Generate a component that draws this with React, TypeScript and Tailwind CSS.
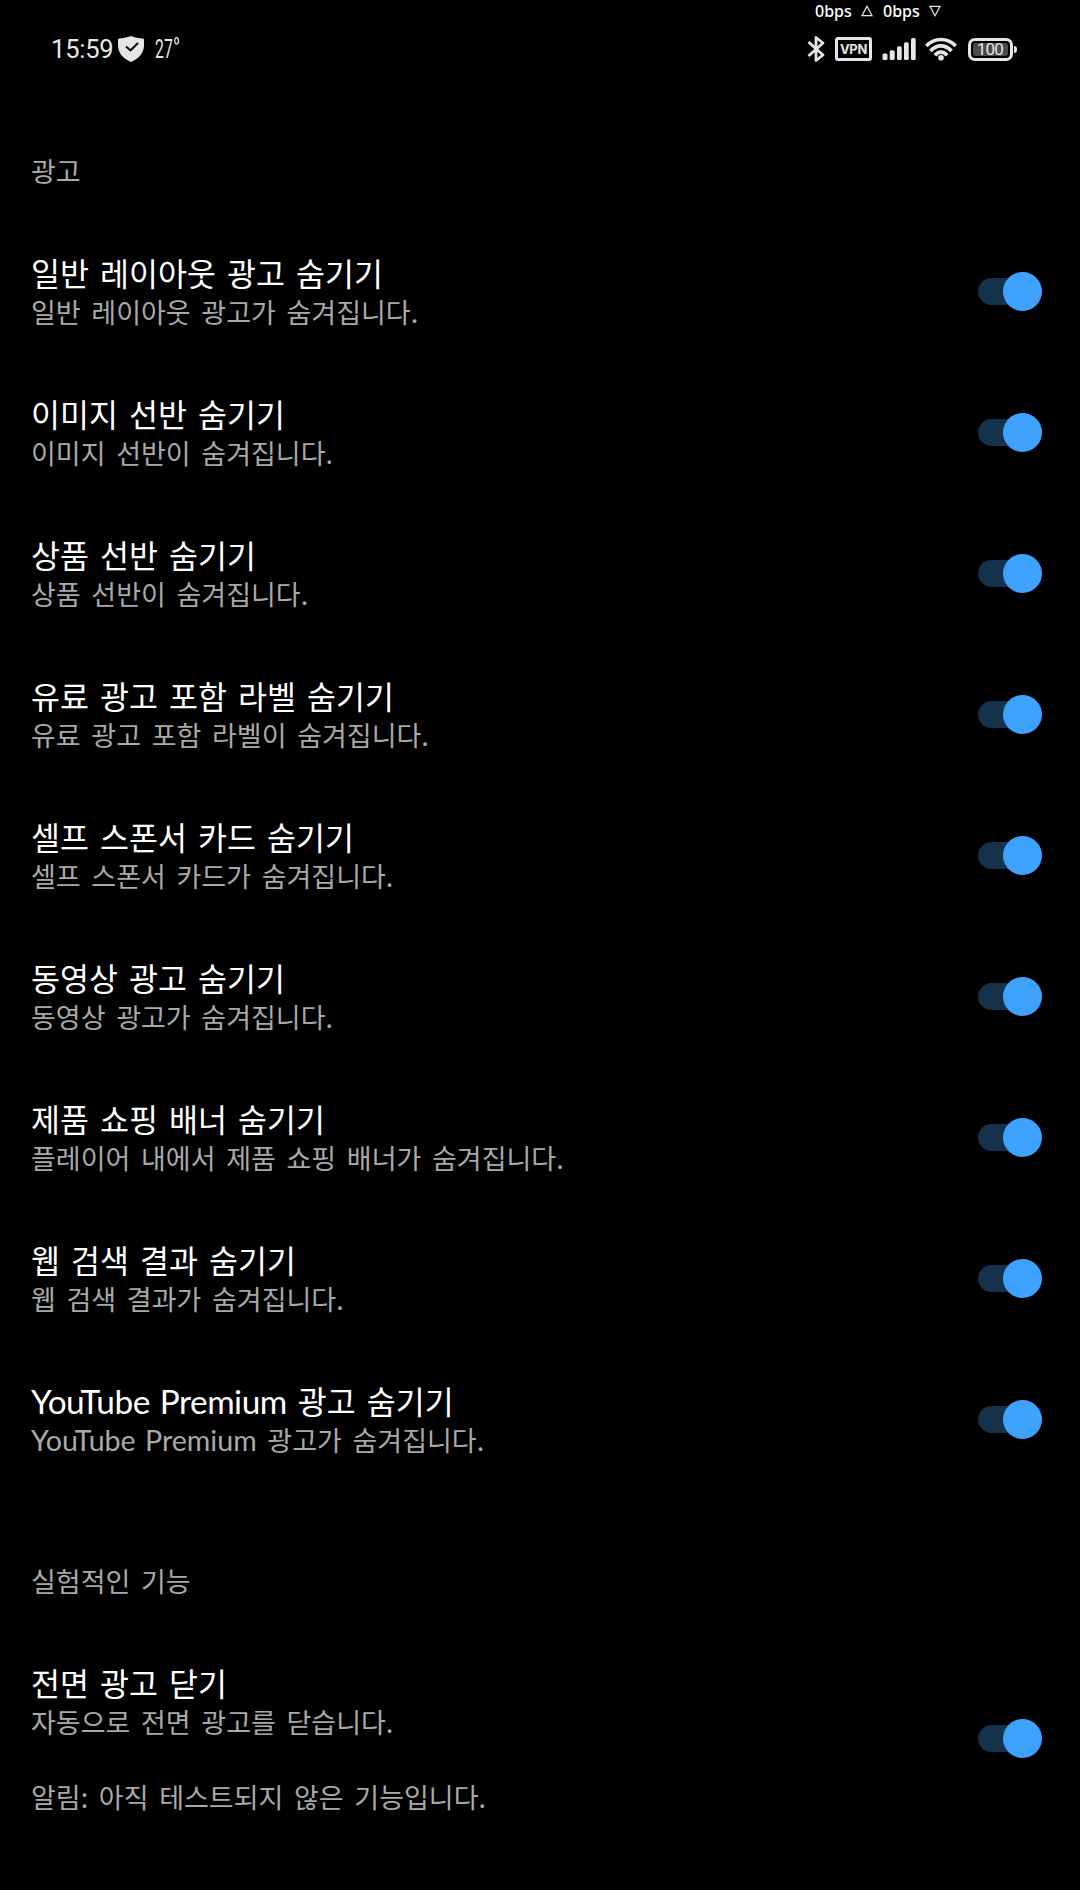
import React from 'react';

interface Setting {
  title: React.ReactNode;
  lines: React.ReactNode[];
}

const adSettings: Setting[] = [
  { title: '일반 레이아웃 광고 숨기기', lines: ['일반 레이아웃 광고가 숨겨집니다.'] },
  { title: '이미지 선반 숨기기', lines: ['이미지 선반이 숨겨집니다.'] },
  { title: '상품 선반 숨기기', lines: ['상품 선반이 숨겨집니다.'] },
  { title: '유료 광고 포함 라벨 숨기기', lines: ['유료 광고 포함 라벨이 숨겨집니다.'] },
  { title: '셀프 스폰서 카드 숨기기', lines: ['셀프 스폰서 카드가 숨겨집니다.'] },
  { title: '동영상 광고 숨기기', lines: ['동영상 광고가 숨겨집니다.'] },
  { title: '제품 쇼핑 배너 숨기기', lines: ['플레이어 내에서 제품 쇼핑 배너가 숨겨집니다.'] },
  { title: '웹 검색 결과 숨기기', lines: ['웹 검색 결과가 숨겨집니다.'] },
  {
    title: (
      <>
        <span className="font-['Lato'] text-[33.4px] tracking-[-0.5px] [word-spacing:2px]">YouTube Premium</span> 광고 숨기기
      </>
    ),
    lines: [
      <>
        <span className="font-['Lato'] text-[28.6px] [word-spacing:2px]">YouTube Premium</span> 광고가 숨겨집니다.
      </>,
    ],
  },
];

const experimentalSettings: Setting[] = [
  {
    title: '전면 광고 닫기',
    lines: ['자동으로 전면 광고를 닫습니다.', '', '알림: 아직 테스트되지 않은 기능입니다.'],
  },
];

function StatusBar() {
  return (
    <header className="h-20 flex-shrink-0 text-[#e6e6e6]">
      {/* Network speed */}
      <div className="flex h-[22px] items-center pl-[815px] font-['Noto_Sans'] text-base font-medium text-white">
        <span className="w-[46px] whitespace-nowrap">0bps</span>
        <svg className="h-3 w-3" viewBox="0 0 12 12" fill="none" stroke="#e6e6e6" strokeWidth="1.2">
          <path d="M6 1.2 11 10.6H1Z" />
        </svg>
        <span className="ml-[10px] w-[46px] whitespace-nowrap">0bps</span>
        <svg className="h-3 w-3" viewBox="0 0 12 12" fill="none" stroke="#e6e6e6" strokeWidth="1.2">
          <path d="M6 10.8 11 1.4H1Z" />
        </svg>
      </div>
      <div className="flex h-[54px] items-center justify-between pr-[63px] pl-[51px]">
        <div className="flex items-center">
          <span className="w-[67px] font-['Roboto'] text-[25.5px] leading-[30px] tracking-[-0.2px] whitespace-nowrap">
            15:59
          </span>
          <svg className="h-[26px] w-[26px]" viewBox="0 0 26 26">
            <path
              d="M13 0C9 1.7 5 2.4 1 2.5Q0 2.6 0 4v5c0 8 5 13.5 13 17 8-3.5 13-9 13-17V4q0-1.4-1-1.5C21 2.4 17 1.7 13 0Z"
              fill="#e6e6e6"
            />
            <path d="m8 10.5 4.5 4L20 7" fill="none" stroke="#000" strokeWidth="2" />
          </svg>
          {/* Temperature, condensed digits */}
          <span className="mr-[-11px] ml-[10.5px] w-[30px] origin-left scale-x-62 font-['Roboto'] text-[25.5px] leading-[30px]">
            27
          </span>
          <svg className="h-[26px] w-[6px]" viewBox="0 0 6 26">
            <ellipse cx="2.6" cy="4.8" rx="1.9" ry="3.2" fill="none" stroke="#e6e6e6" strokeWidth="1.3" />
          </svg>
        </div>
        <div className="flex items-center">
          <svg className="h-7 w-[18px]" viewBox="0 0 18 28" fill="none" stroke="#e6e6e6" strokeWidth="2.8">
            <path d="m1.5 7 14.5 13L9 25.5V2.5L16 8 1.5 21" strokeLinejoin="round" />
          </svg>
          <span className="ml-[10px] flex h-6 w-[37px] items-center justify-center rounded-[3px] border-[3px] border-[#e6e6e6] pt-px font-['Inter'] text-[13px] leading-none font-bold tracking-[-0.3px]">
            VPN
          </span>
          <svg className="ml-[10px] h-[22px] w-[34px]" viewBox="0 0 34 22" fill="#e6e6e6">
            <rect x="0.5" y="15.5" width="5" height="6.5" rx="1.5" />
            <rect x="7.7" y="12.2" width="5" height="9.8" rx="1.5" />
            <rect x="15" y="8.2" width="4.7" height="13.8" rx="1.5" />
            <rect x="22" y="4.2" width="4.7" height="17.8" rx="1.5" />
            <rect x="29" y="0" width="4.7" height="22" rx="1.5" />
          </svg>
          <svg className="ml-[9px] h-6 w-8" viewBox="0 0 32 24" fill="none" stroke="#e6e6e6" strokeWidth="3.7">
            <path d="M1.3 9Q7.5 2.5 16 2.5T30.7 9" />
            <path d="M5.5 14Q10 8.8 16 8.8t10.5 5.2" />
            <path d="M10 18.3q2.5-3.2 6-3.2t6 3.2" />
            <circle cx="16" cy="20.8" r="2.8" fill="#e6e6e6" stroke="none" />
          </svg>
          <div className="ml-[11px] flex h-[23px] w-[45px] items-center justify-center rounded-[7px] border-[3px] border-[#e6e6e6]">
            <span className="flex h-[13px] w-[35px] items-center justify-center rounded-[3px] bg-[#4a4a4a] pr-px font-['Roboto'] text-[17px] leading-none tracking-[-0.8px]">
              100
            </span>
          </div>
          <span className="ml-[1px] h-[7px] w-[3px] rounded-r bg-[#e6e6e6]" />
        </div>
      </div>
    </header>
  );
}

function Toggle() {
  return (
    <button role="switch" aria-checked="true" className="flex h-[39px] w-[65px] items-center">
      <span className="flex h-[27px] w-[50px] items-center rounded-full bg-[#15324c]">
        <span className="ml-[25px] h-[39px] w-[39px] flex-shrink-0 rounded-full bg-[#3ea2fd]" />
      </span>
    </button>
  );
}

function SectionHeader({ children }: { children: React.ReactNode }) {
  return (
    <h2 className="h-[141px] flex-shrink-0 pt-[72px] text-[27px] leading-[37.5px] text-[#a9a9a9] [word-spacing:4.5px]">
      {children}
    </h2>
  );
}

function SettingRow({ title, lines }: Setting) {
  return (
    <div className="flex flex-shrink-0 items-center justify-between pt-[29.5px] pb-[30px]">
      <div className="pb-[1.5px]">
        <div className="h-[42.5px] text-[31.5px] leading-[42.5px] text-white [word-spacing:4px]">{title}</div>
        {lines.map((line, i) => (
          <p key={i} className="h-[37.5px] text-[27px] leading-[37.5px] text-[#a9a9a9] [word-spacing:4.6px]">
            {line}
          </p>
        ))}
      </div>
      <Toggle />
    </div>
  );
}

export default function App() {
  return (
    <div className="flex h-[1890px] w-[1080px] flex-col overflow-hidden bg-black font-['Noto_Sans_CJK_KR',sans-serif]">
      <StatusBar />
      <main className="flex flex-col pr-[37px] pl-[31px]">
        <SectionHeader>광고</SectionHeader>
        {adSettings.map((setting, i) => (
          <SettingRow key={i} {...setting} />
        ))}
        <SectionHeader>실험적인 기능</SectionHeader>
        {experimentalSettings.map((setting, i) => (
          <SettingRow key={i} {...setting} />
        ))}
      </main>
    </div>
  );
}
